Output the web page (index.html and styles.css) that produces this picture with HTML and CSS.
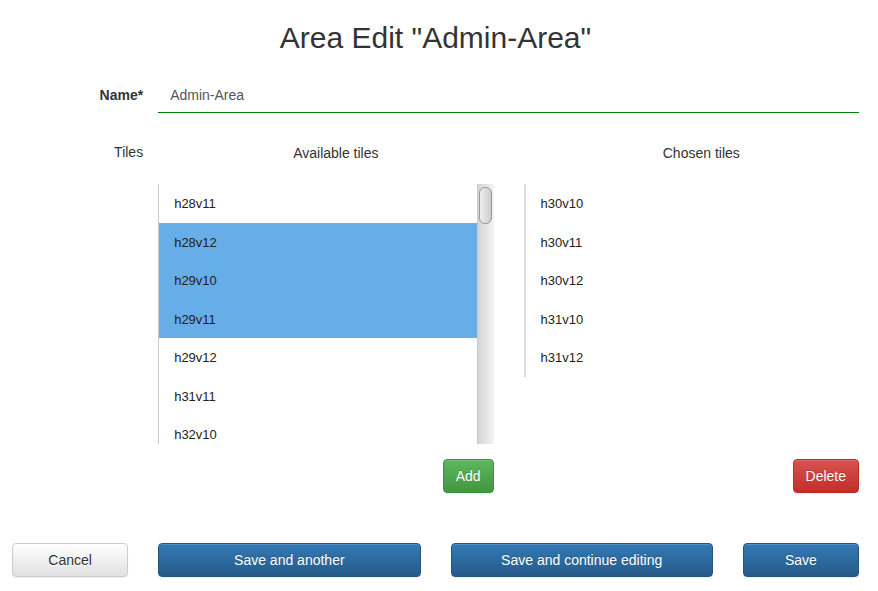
FILE: index.html
```html
<!DOCTYPE html>
<html lang="en">
<head>
<meta charset="utf-8">
<title>Area Edit</title>
<link rel="stylesheet" href="styles.css">
</head>
<body>
<form class="area-form">
  <h1 class="title">Area Edit "Admin-Area"</h1>

  <div class="row name-row">
    <label class="label label-required" for="name">Name*</label>
    <input class="text-input" id="name" type="text" value="Admin-Area">
  </div>

  <div class="row tiles-row">
    <span class="label">Tiles</span>
    <div class="lists">
      <div class="list-column">
        <label class="list-title" for="available">Available tiles</label>
        <div class="list-area">
          <div class="scroll-list">
            <select class="list" id="available" multiple size="7">
              <option>h28v11</option>
              <option selected>h28v12</option>
              <option selected>h29v10</option>
              <option selected>h29v11</option>
              <option>h29v12</option>
              <option>h31v11</option>
              <option>h32v10</option>
            </select>
            <div class="scroll-track"><div class="scroll-thumb"></div></div>
          </div>
        </div>
        <button class="button button-add" type="button">Add</button>
      </div>
      <div class="list-column">
        <label class="list-title" for="chosen">Chosen tiles</label>
        <div class="list-area">
          <select class="list list-chosen" id="chosen" multiple size="5">
            <option>h30v10</option>
            <option>h30v11</option>
            <option>h30v12</option>
            <option>h31v10</option>
            <option>h31v12</option>
          </select>
        </div>
        <button class="button button-delete" type="button">Delete</button>
      </div>
    </div>
  </div>

  <div class="actions">
    <button class="button button-cancel" type="button">Cancel</button>
    <button class="button button-save wide" type="button">Save and another</button>
    <button class="button button-save wide" type="button">Save and continue editing</button>
    <button class="button button-save" type="submit">Save</button>
  </div>
</form>
</body>
</html>
```
FILE: styles.css
```css
* {
  box-sizing: border-box;
}

body {
  margin: 0;
  background: #fff;
  color: #333;
  font-family: "Liberation Sans", Arial, sans-serif;
  font-size: 14px;
  line-height: 20px;
}

.area-form {
  padding: 20px 19px 12px 12px;
}

.title {
  margin: 0 0 22px;
  font-size: 30px;
  font-weight: 500;
  line-height: 36px;
  text-align: center;
}

/* Twelve columns with 30px gutters: labels span two, fields span ten */
.row,
.actions {
  display: grid;
  grid-template-columns: repeat(12, minmax(0, 1fr));
  column-gap: 30px;
}

.label {
  grid-column: span 2;
  margin-right: -15px;
  text-align: right;
}

.label-required {
  padding-top: 7px;
  font-weight: bold;
}

.text-input {
  grid-column: span 10;
  width: 100%;
  height: 35px;
  padding: 6px 12px;
  border: 0;
  border-bottom: 1px solid #008000;
  background: transparent;
  color: #555;
  font: inherit;
  outline: 0;
}

.tiles-row {
  margin-top: 29px;
}

.lists {
  grid-column: span 10;
  display: grid;
  grid-template-columns: 1fr 1fr;
  column-gap: 30px;
}

.list-column {
  display: flex;
  flex-direction: column;
  align-items: flex-end;
}

.list-title {
  width: 100%;
  margin: 1px 0 21px;
  padding-left: 20px;
  text-align: center;
}

.list-area {
  width: 100%;
  height: 260px;
  margin-bottom: 15px;
}

.scroll-list {
  display: flex;
  height: 100%;
  overflow: hidden;
}

.list {
  display: block;
  width: 100%;
  height: auto;
  margin: 0;
  padding: 0;
  border: 0;
  border-left: 1px solid #ccc;
  border-radius: 0;
  background: #fff;
  color: #222;
  font-family: inherit;
  font-size: 13px;
  overflow: hidden;
  outline: 0;
}

.scroll-list .list {
  height: 271px;
}

.list-chosen {
  height: 193px;
  border-left: 2px solid #ddd;
}

.list option {
  min-height: 0;
  padding: 12px 15px;
  color: #222;
}

.list option:nth-child(even) {
  padding-bottom: 11px;
}

.list option:checked {
  background: linear-gradient(#67ade8, #67ade8);
}

.scroll-track {
  flex: 0 0 17px;
  padding: 3px 2px;
  background: linear-gradient(to right, #c4c4c4, #d6d6d6 10%, #f4f4f4);
}

.scroll-thumb {
  height: 37px;
  border: 1px solid #999;
  border-radius: 6px;
  background: linear-gradient(to right, #eee, #ccc);
}

.button {
  height: 34px;
  padding: 0 12px;
  border: 1px solid;
  border-radius: 4px;
  box-shadow: inset 0 1px 0 rgba(255, 255, 255, .15), 0 1px 1px rgba(0, 0, 0, .075);
  color: #fff;
  font: inherit;
  text-align: center;
  text-shadow: 0 -1px 0 rgba(0, 0, 0, .2);
  white-space: nowrap;
}

.button-add {
  border-color: #3e8f3e;
  background: linear-gradient(#5cb85c, #419641);
}

.button-delete {
  border-color: #b92c28;
  background: linear-gradient(#d9534f, #c12e2a);
}

.actions {
  margin-top: 50px;
}

.actions .button {
  grid-column: span 2;
}

.actions .wide {
  grid-column: span 4;
}

.button-save {
  border-color: #245580;
  background: linear-gradient(#337ab7, #265a88);
}

.button-cancel {
  border-color: #ccc;
  background: linear-gradient(#fff, #e0e0e0);
  color: #333;
  text-shadow: 0 1px 0 #fff;
}
```
